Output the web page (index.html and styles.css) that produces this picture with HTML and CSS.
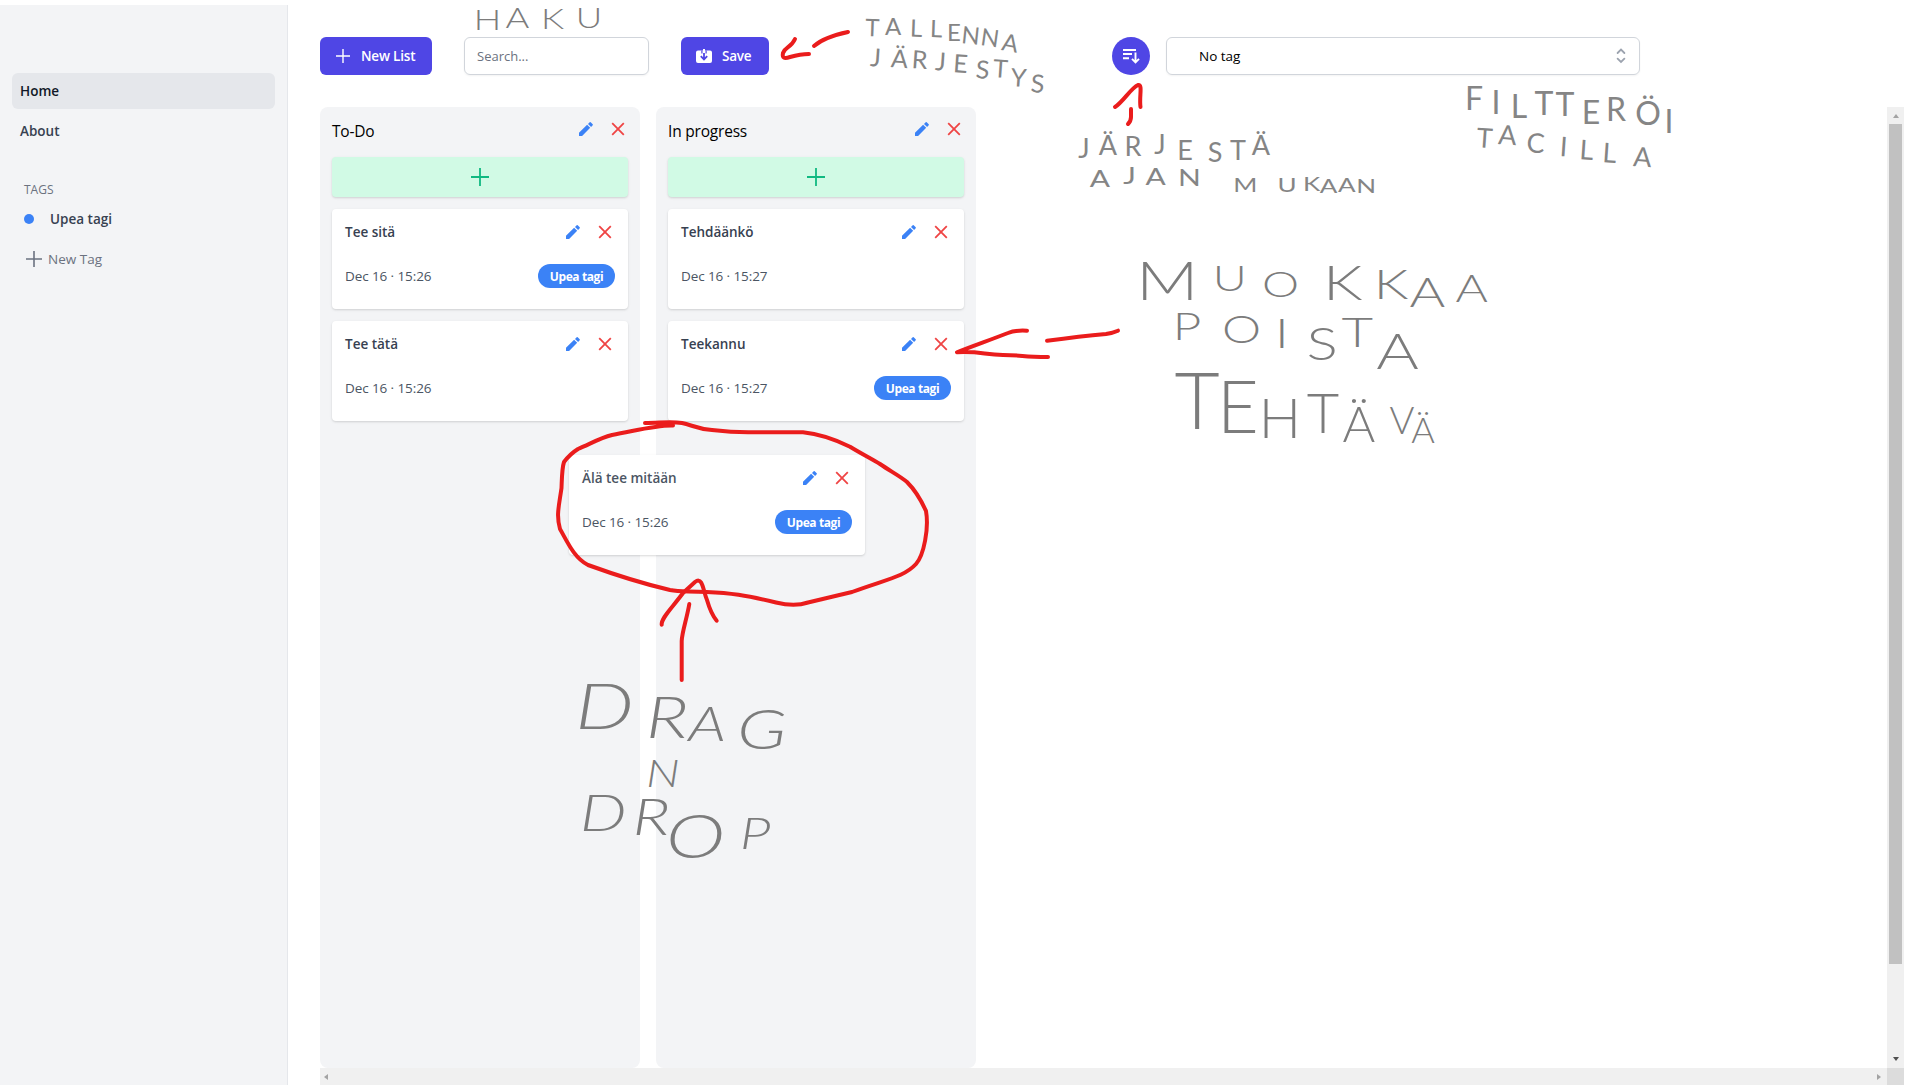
FILE: index.html
```html
<!DOCTYPE html>
<html lang="fi">
<head>
<meta charset="utf-8">
<title>Kanban</title>
<link rel="stylesheet" href="styles.css">
</head>
<body>
<svg class="defs" aria-hidden="true">
  <symbol id="pencil" viewBox="0 0 14 14"><path d="M0 10.8 8.1 2.7 11.2 5.8 3.1 13.9H0zM9 1.9 10.7.3Q11.2-.1 11.7.3L13.7 2.3Q14.1 2.8 13.7 3.3L12.1 5z" fill="#3b82f6"/></symbol>
  <symbol id="cross" viewBox="0 0 14 14"><path d="M1.2 1.2 12.8 12.800M12.800 1.2 1.2 12.800" stroke="#ef4444" stroke-width="1.800" fill="none"/></symbol>
  <symbol id="plus" viewBox="0 0 18 18"><path d="M9 0V18M0 9H18" stroke="currentColor" stroke-width="1.8" fill="none"/></symbol>
</svg>
<div class="app">
  <aside class="sidebar">
    <nav class="nav">
      <a class="nav-link active">Home</a>
      <a class="nav-link">About</a>
    </nav>
    <h3 class="tags-title">TAGS</h3>
    <a class="tag-link"><span class="dot"></span><span>Upea tagi</span></a>
    <a class="new-tag"><svg><use href="#plus"/></svg><span>New Tag</span></a>
  </aside>
  <main class="main">
    <header class="toolbar">
      <button class="btn new-list"><svg width="14" height="14"><use href="#plus"/></svg><span>New List</span></button>
      <div class="search">Search...</div>
      <button class="btn save"><svg width="16" height="14" viewBox="0 0 16 14"><path d="M2 1.5H7V0H9V1.5H14Q16 1.5 16 3.5V12Q16 14 14 14H2Q0 14 0 12V3.5Q0 1.5 2 1.5Z" fill="#fff"/><path d="M8 4V10M4.8 7.2 8 10.4 11.2 7.2" fill="none" stroke="#4f46e5" stroke-width="1.8"/><path d="M5.900 1.500V4.500M10.100 1.500V4.500" stroke="#4f46e5" stroke-width="1.200"/></svg><span>Save</span></button>
      <button class="sort"><svg width="18" height="16" viewBox="0 0 18 16"><path d="M1 2H14M1 6H10M1 10.200H7M13.500 4.500V14M10 10.800 13.500 14.300 17 10.800" fill="none" stroke="#fff" stroke-width="1.900"/></svg></button>
      <div class="select"><span>No tag</span><svg width="10" height="16" viewBox="0 0 10 16"><path d="M1.6 5 5 1.6 8.4 5M1.6 10.6 5 14 8.4 10.6" fill="none" stroke="#9ca3af" stroke-width="1.8" stroke-linecap="round"/></svg></div>
    </header>
    <div class="board-frame">
      <div class="board">
        <section class="list">
          <div class="list-head"><h2>To-Do</h2><span class="actions"><svg><use href="#pencil"/></svg><svg><use href="#cross"/></svg></span></div>
          <button class="add"><svg><use href="#plus"/></svg></button>
          <article class="card">
            <div class="row"><h4>Tee sitä</h4><span class="actions"><svg><use href="#pencil"/></svg><svg><use href="#cross"/></svg></span></div>
            <div class="row"><time>Dec 16 · 15:26</time><span class="pill">Upea tagi</span></div>
          </article>
          <article class="card">
            <div class="row"><h4>Tee tätä</h4><span class="actions"><svg><use href="#pencil"/></svg><svg><use href="#cross"/></svg></span></div>
            <div class="row"><time>Dec 16 · 15:26</time></div>
          </article>
        </section>
        <section class="list">
          <div class="list-head"><h2>In progress</h2><span class="actions"><svg><use href="#pencil"/></svg><svg><use href="#cross"/></svg></span></div>
          <button class="add"><svg><use href="#plus"/></svg></button>
          <article class="card">
            <div class="row"><h4>Tehdäänkö</h4><span class="actions"><svg><use href="#pencil"/></svg><svg><use href="#cross"/></svg></span></div>
            <div class="row"><time>Dec 16 · 15:27</time></div>
          </article>
          <article class="card">
            <div class="row"><h4>Teekannu</h4><span class="actions"><svg><use href="#pencil"/></svg><svg><use href="#cross"/></svg></span></div>
            <div class="row"><time>Dec 16 · 15:27</time><span class="pill">Upea tagi</span></div>
          </article>
        </section>
      </div>
      <div class="vscroll"><i class="tri up"></i><i class="thumb"></i><i class="tri down"></i></div>
      <div class="hscroll"><i class="tri left"></i><i class="tri right"></i></div>
      <div class="corner"></div>
    </div>
  </main>
</div>
<article class="card dragged">
  <div class="row"><h4>Älä tee mitään</h4><span class="actions"><svg><use href="#pencil"/></svg><svg><use href="#cross"/></svg></span></div>
  <div class="row"><time>Dec 16 · 15:26</time><span class="pill">Upea tagi</span></div>
</article>
<svg class="notes" viewBox="0 0 1920 1085">
  <g class="pen">
    <path d="M795 39C791 48 785 47 783 53C782 58 784 59 790 57C797 55 803 54 809 54"/>
    <path d="M814 46C822 39 834 35 848 32"/>
    <path d="M1115 107C1123 102 1131 88 1138 85C1143 84 1139 96 1140.500 107"/>
    <path d="M1131 109V117Q1131 121 1128 124"/>
    <path d="M1027 330.700Q1015 330 1008 333C990 340 970 347 957 352.300C980 351 985 355 1003 355C1025 355 1020 357 1048 357"/>
    <path d="M1047 340.700C1068 338 1090 335.500 1106 334Q1113 333 1118 330.700"/>
    <path d="M645 423C660 423 670 421 682 423C692 425 697 429 712 430C738 433 745 432 757 432.300H803C820 434 834 439 850 446.700C862 454 872 459 880 464C890 471 900 476 907 482C917 492 922 502 926 511C929 528 924 555 916 564C904 577 887 579 852 592L808 602.500C798 606 786 605 776 602.500C745 595 730 593 706.700 592C685 591 680 592 670 590C640 583 610 573 588 565C574 558 567 541 560 529C556 515 559 506 561.500 488C562 475 562 468 564 462Q570 454 578 449C592 443 600 438 612 435C635 431 655 425 673 425.500"/>
    <path d="M661.700 624.700C661 618 672 608 683 593L695 582C703 576 703 591 707 600Q711 614 716.700 620.700"/>
    <path d="M689.300 604C687 618 682 632 681.700 641V680"/>
  </g>
  <g class="hand">
    <text class="wide" x="375 398 425 453" y="30 28 29 28" font-size="28">HAKU</text>
    <text class="small" x="872 893 916 936 954 970 989 1009" y="36 35 36.5 37 41 43 45 50" rotate="2 0 2 2 0 6 8 10" font-size="24">TALLENNA</text>
    <text class="small" x="875 899 919 940 960 982 1000 1018 1037" y="66 67 68 70 72 78 77 86 92" rotate="4" font-size="25">JÄRJESTYS</text>
    <text class="small" x="1084 1108 1133 1160 1185 1215 1238 1261" y="158 155 156 154 160 162 160 155" font-size="27">JÄRJESTÄ</text>
    <text class="wide small" x="846 869 889 915" y="187 184 185 186" font-size="23">AJAN</text>
    <text class="wide small" x="958 990 1009 1022 1036 1051" y="192 192 191 193 192 193" font-size="20">MUKAAN</text>
    <text class="small" x="1474 1496 1519 1544 1565 1591 1616 1648 1669" y="110 114 118 115 116 124 121 125 133" font-size="32">FILTTERÖI</text>
    <text class="small" x="1484 1507 1535 1563 1586 1609 1642" y="147 144 152 156 159 162 166" rotate="4" font-size="27">TACILLA</text>
    <text class="wide" x="898 946 985 1033 1070 1098 1132" y="300 291 297 300 299 307 302"><tspan font-size="53">M</tspan><tspan font-size="36">UO</tspan><tspan font-size="48">K</tspan><tspan font-size="42">KA</tspan><tspan font-size="38">A</tspan></text>
    <text class="wide" x="913 955 986 1017 1044 1075" y="340 343 348 360 347 369"><tspan font-size="38">PO</tspan><tspan font-size="42">I</tspan><tspan font-size="45">S</tspan><tspan font-size="42">T</tspan><tspan font-size="50">A</tspan></text>
    <text x="1197 1238 1280 1323 1359 1402 1423" y="429 433 438 433 442 434 443"><tspan font-size="78">T</tspan><tspan font-size="72">E</tspan><tspan font-size="56">HT</tspan><tspan font-size="50">Ä</tspan><tspan font-size="38">V</tspan><tspan font-size="36">Ä</tspan></text>
    <text class="wide lean" x="465 513 544 586" y="729 738 741 749"><tspan font-size="64">D</tspan><tspan font-size="58">R</tspan><tspan font-size="48">A</tspan><tspan font-size="56">G</tspan></text>
    <text class="wide lean" x="510" y="787" font-size="37">N</text>
    <text class="wide lean" x="464 501 535 581" y="831 835 858 849"><tspan font-size="51">DR</tspan><tspan font-size="62">O</tspan><tspan font-size="44">P</tspan></text>
  </g>
</svg>
</body>
</html>
```
FILE: styles.css
```css
* { box-sizing: border-box; }
body { margin: 0; height: 1085px; overflow: hidden; background: #fff; font-family: "Open Sans", "Noto Sans", sans-serif; font-size: 14px; color: #000; }
h2, h3, h4 { margin: 0; font-weight: 400; }
button { border: 0; padding: 0; font: inherit; }
.defs { display: none; }
.app { display: flex; height: 1085px; padding-top: 5px; }

.sidebar { width: 288px; flex: none; background: #f3f4f6; border-right: 1px solid #e5e7eb; padding: 68px 12px 0; }
.nav { display: grid; gap: 4px; }
.nav-link { height: 36px; line-height: 36px; padding-left: 8px; border-radius: 6px; font-weight: 550; font-size: 13.500px; color: #374151; }
.nav-link.active { background: #e5e7eb; color: #111827; }
.tags-title { margin: 32px 0 0 12px; height: 18px; line-height: 17px; font-size: 12px; font-weight: 500; color: #6b7280; }
.tag-link { display: flex; align-items: center; gap: 16px; height: 40px; padding-left: 12px; font-weight: 550; font-size: 13.500px; color: #374151; }
.dot { width: 10px; height: 10px; border-radius: 50%; background: #3b82f6; }
.new-tag { display: flex; align-items: center; gap: 6px; height: 40px; padding-left: 14px; font-weight: 500; font-size: 13.500px; color: #6b7280; }
.new-tag svg { width: 16px; height: 16px; }

.main { flex: 1; display: flex; flex-direction: column; padding: 32px 16px 0 32px; min-width: 0; }
.toolbar { display: flex; height: 38px; margin-bottom: 32px; }
.btn { display: flex; align-items: center; background: #4f46e5; color: #fff; border-radius: 6px; font-weight: 600; font-size: 13.500px; }
.new-list { width: 112px; padding-left: 16px; gap: 11px; letter-spacing: -.2px; }
.save { width: 88px; padding-left: 15px; gap: 10px; margin-left: 32px; letter-spacing: -.2px; }
.search { width: 185px; margin-left: 32px; padding-left: 12px; line-height: 36px; border: 1px solid #d1d5db; border-radius: 6px; color: #6b7280; font-size: 13px; box-shadow: 0 1px 2px rgba(0,0,0,.05); }
.sort { display: flex; align-items: center; justify-content: center; width: 38px; margin-left: 343px; border-radius: 50%; background: #4f46e5; }
.select { display: flex; align-items: center; justify-content: space-between; width: 474px; margin-left: 16px; padding: 0 13px 0 32px; border: 1px solid #d1d5db; border-radius: 6px; font-size: 13.500px; box-shadow: 0 1px 2px rgba(0,0,0,.05); }

.board-frame { flex: 1; display: grid; grid-template: 1fr 17px / 1fr 17px; }
.board { display: flex; gap: 16px; }
.list { width: 320px; padding: 12px; border-radius: 8px; background: #f3f4f6; }
.list-head { display: flex; justify-content: space-between; height: 38px; }
.list-head h2 { font-size: 15.500px; line-height: 25px; letter-spacing: -.2px; }
.list-head .actions { margin: 3px 3px 0 0; }
.actions { display: flex; gap: 18px; }
.actions svg { width: 14px; height: 14px; }
.add { display: flex; align-items: center; justify-content: center; width: 100%; height: 40px; border-radius: 4px; background: #d1fae5; color: #10b981; box-shadow: 0 1px 3px rgba(0,0,0,.1), 0 1px 2px rgba(0,0,0,.06); }
.add svg { width: 18px; height: 18px; }
.card { width: 296px; height: 100px; margin-top: 12px; padding: 11px 13px; border-radius: 4px; background: #fff; box-shadow: 0 1px 3px rgba(0,0,0,.1), 0 1px 2px rgba(0,0,0,.06); }
.row { display: flex; align-items: center; justify-content: space-between; height: 24px; }
.row + .row { margin-top: 20px; }
.row .actions { margin: 0 3px 0 0; }
.card h4 { font-size: 13.500px; font-weight: 550; color: #374151; }
.card time { font-size: 13.500px; color: #4b5563; letter-spacing: -.1px; }
.pill { width: 77px; height: 24px; padding-top: 1px; line-height: 24px; border-radius: 12px; background: #3b82f6; color: #fff; font-size: 12px; font-weight: 700; text-align: center; letter-spacing: -.4px; }
.dragged { position: absolute; left: 569px; top: 455px; margin: 0; }
.dragged h4 { color: #4b5563; }

.vscroll, .hscroll { display: flex; align-items: center; justify-content: space-between; background: #f0f0f0; }
.vscroll { flex-direction: column; padding: 7px 0; }
.hscroll { padding: 0 6px 0 4px; }
.corner { background: #dcdcdc; }
.tri { border: 3.500px solid transparent; }
.up { border-top: 0; border-bottom: 4px solid #a3a3a3; }
.down { border-bottom: 0; border-top: 4px solid #505050; }
.left { border-left: 0; border-right: 4px solid #a3a3a3; }
.right { border-right: 0; border-left: 4px solid #a3a3a3; }
.thumb { width: 13px; height: 840px; margin: 6px 0 auto; background: #c1c1c1; }

.notes { position: absolute; left: 0; top: 0; width: 1920px; height: 1085px; pointer-events: none; }
.pen path { fill: none; stroke: #ea1c1c; stroke-width: 4px; stroke-linecap: round; stroke-linejoin: round; }
.hand text { font-family: Lato, sans-serif; font-weight: 300; fill: #7c7c7c; text-anchor: middle; }
.hand .small { font-weight: 400; fill: #858585; }
.hand .wide { transform: scale(1.3, 1); }
.hand .lean { font-style: italic; }
```
